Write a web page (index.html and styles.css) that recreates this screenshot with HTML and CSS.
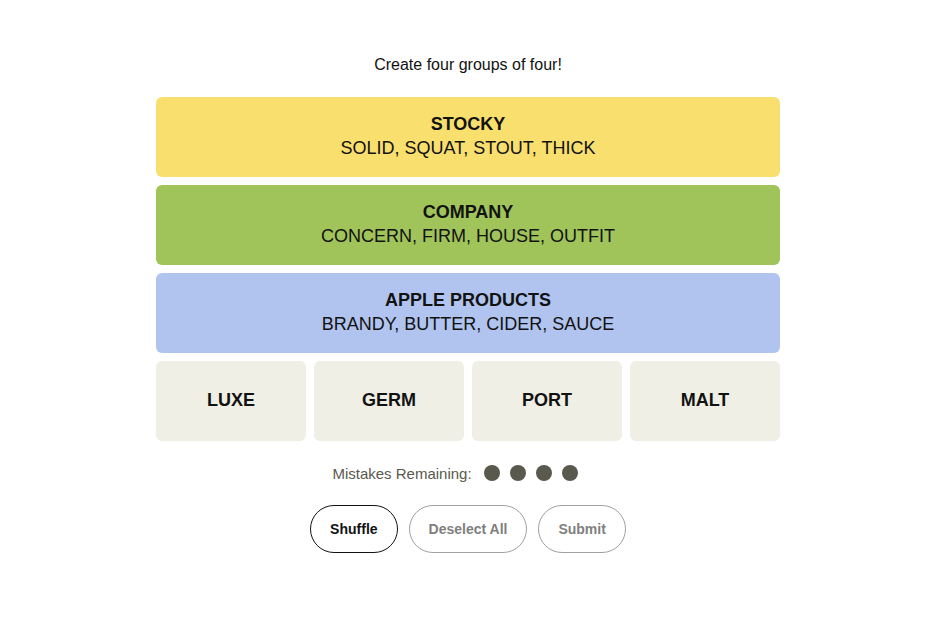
FILE: index.html
```html
<!DOCTYPE html>
<html>
<head>
<meta charset="utf-8">
<link rel="stylesheet" href="styles.css">
</head>
<body>
<main class="game">
  <p class="prompt">Create four groups of four!</p>
  <section class="board">
    <div class="group yellow">
      <div class="group-title">STOCKY</div>
      <div class="group-words">SOLID, SQUAT, STOUT, THICK</div>
    </div>
    <div class="group green">
      <div class="group-title">COMPANY</div>
      <div class="group-words">CONCERN, FIRM, HOUSE, OUTFIT</div>
    </div>
    <div class="group blue">
      <div class="group-title">APPLE PRODUCTS</div>
      <div class="group-words">BRANDY, BUTTER, CIDER, SAUCE</div>
    </div>
    <div class="tiles">
      <div class="tile">LUXE</div>
      <div class="tile">GERM</div>
      <div class="tile">PORT</div>
      <div class="tile">MALT</div>
    </div>
  </section>
  <div class="mistakes">
    <span class="mistakes-label">Mistakes Remaining:</span>
    <span class="dots"><i class="dot"></i><i class="dot"></i><i class="dot"></i><i class="dot"></i></span>
  </div>
  <div class="actions">
    <button class="btn active">Shuffle</button>
    <button class="btn">Deselect All</button>
    <button class="btn">Submit</button>
  </div>
</main>
</body>
</html>
```
FILE: styles.css
```css
* { box-sizing: border-box; }
html, body { margin: 0; padding: 0; background: #ffffff; }
body { font-family: "Liberation Sans", Arial, sans-serif; color: #000; padding-left: 8px; }
.game {
  width: 624px;
  margin: 0 auto;
  padding-top: 53px;
  display: flex;
  flex-direction: column;
  align-items: center;
}
.prompt {
  margin: 0;
  height: 24px;
  line-height: 24px;
  font-size: 16px;
  color: #121212;
}
.board {
  margin-top: 20px;
  width: 624px;
  display: flex;
  flex-direction: column;
  gap: 8px;
}
.group {
  height: 80px;
  border-radius: 6px;
  display: flex;
  flex-direction: column;
  align-items: center;
  justify-content: center;
  color: #121212;
  padding-bottom: 2px;
}
.yellow { background: #f9df6d; }
.green { background: #a0c35a; }
.blue { background: #b0c4ef; }
.group-title {
  font-weight: 700;
  font-size: 18px;
  line-height: 24px;
}
.group-words {
  font-size: 18px;
  line-height: 24px;
  margin-top: 0;
}
.tiles {
  display: grid;
  grid-template-columns: repeat(4, 150px);
  gap: 8px;
}
.tile {
  height: 80px;
  border-radius: 6px;
  background: #efefe6;
  display: flex;
  align-items: center;
  justify-content: center;
  font-weight: 700;
  font-size: 18px;
  color: #121212;
  padding-bottom: 2px;
}
.mistakes {
  margin-top: 20px;
  height: 24px;
  display: flex;
  align-items: center;
  gap: 12px;
  font-size: 15px;
  color: #5a594e;
  padding-right: 26px;
}
.dots { display: flex; gap: 10px; }
.dot {
  width: 16px;
  height: 16px;
  border-radius: 50%;
  background: #5a594e;
  display: block;
}
.actions {
  margin-top: 20px;
  display: flex;
  gap: 11px;
}
.btn {
  height: 48px;
  padding: 0 19px;
  border-radius: 24px;
  border: 1px solid #a0a0a0;
  background: #fff;
  font-family: "Liberation Sans", Arial, sans-serif;
  font-weight: 700;
  font-size: 14px;
  color: #7f7f7f;
}
.btn.active {
  border-color: #121212;
  color: #121212;
}
```
